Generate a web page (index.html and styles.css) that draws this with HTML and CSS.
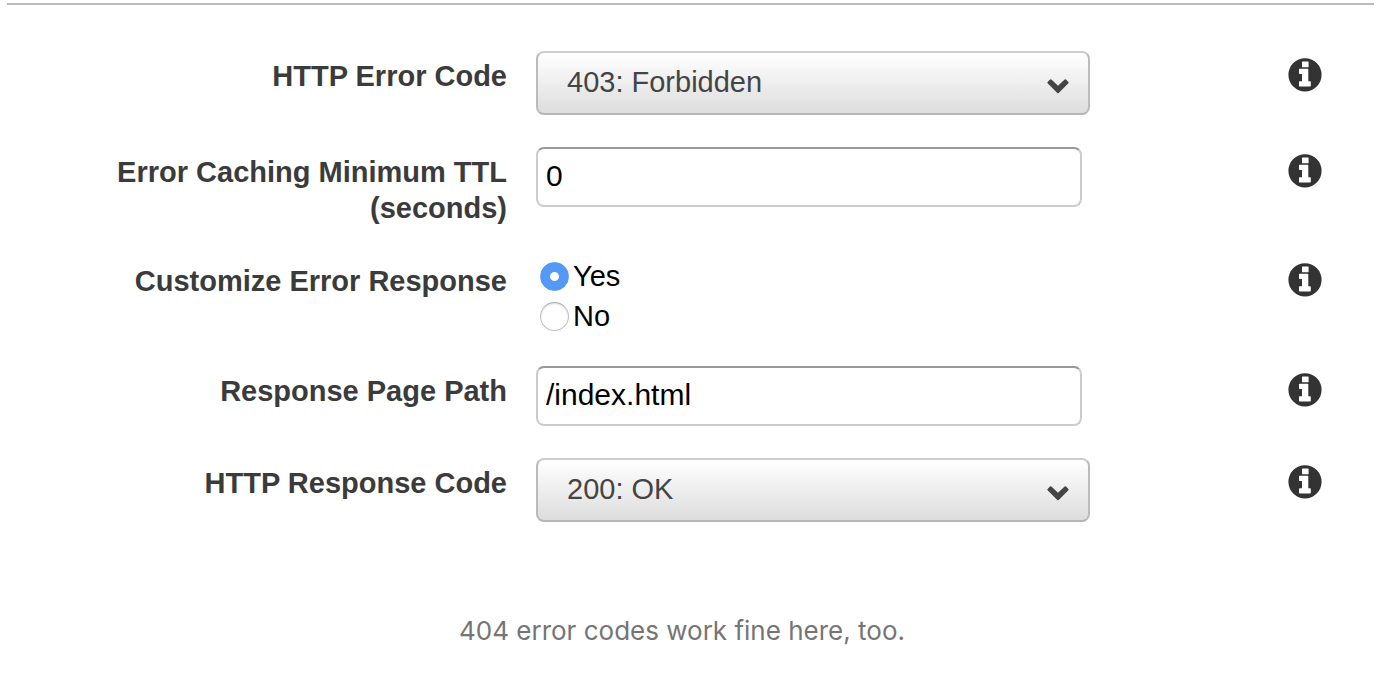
FILE: index.html
```html
<!DOCTYPE html>
<html lang="en">
<head>
<meta charset="utf-8">
<title>Custom Error Response</title>
<link rel="stylesheet" href="styles.css">
</head>
<body>
<svg class="sprite" aria-hidden="true">
  <symbol id="info" viewBox="0 0 34 34">
    <path fill="currentColor" fill-rule="evenodd" d="M17 .2a16.600 16.600 0 1 1 0 33.200a16.600 16.600 0 0 1 0-33.200zM14.500 3.500h5.600q.5 0 .5.5v4.800q0 .5-.5.5h-5.600q-.5 0-.5-.5V4q0-.5.5-.5zM11.700 10.800h7.900q.7 0 .7.700v11.700h1.800q.7 0 .7.700v3.900q0 .7-.7.700H11.700q-.7 0-.7-.7v-3.900q0-.7.7-.7h2.300v-7.200h-2.300q-.7 0-.7-.7v-3.800q0-.7.7-.7z"/>
  </symbol>
  <symbol id="chevron" viewBox="0 0 22 15">
    <path fill="currentColor" d="M.6 2.900L3 .6q.7-.6 1.400 0L11 6.800L17.600.6q.7-.6 1.400 0l2.400 2.300q.6.7 0 1.400L11.700 14q-.7.7-1.400 0L.6 4.300q-.6-.7 0-1.400z"/>
  </symbol>
</svg>
<main class="page">
  <form class="form">
    <div class="row">
      <label class="label" for="error-code">HTTP Error Code</label>
      <div class="field">
        <div class="dropdown">
          <select class="select" id="error-code"><option>403: Forbidden</option></select>
          <svg class="chevron" aria-hidden="true"><use href="#chevron"/></svg>
        </div>
      </div>
      <button class="help" type="button" aria-label="About HTTP Error Code"><svg class="icon"><use href="#info"/></svg></button>
    </div>
    <div class="row">
      <label class="label" for="ttl">Error Caching Minimum TTL (seconds)</label>
      <div class="field"><input class="text" id="ttl" type="text" value="0"></div>
      <button class="help" type="button" aria-label="About Error Caching Minimum TTL"><svg class="icon"><use href="#info"/></svg></button>
    </div>
    <div class="row" role="radiogroup" aria-labelledby="customize">
      <span class="label" id="customize">Customize Error Response</span>
      <div class="choices">
        <label class="choice"><input class="radio" type="radio" name="customize" checked>Yes</label>
        <label class="choice"><input class="radio" type="radio" name="customize">No</label>
      </div>
      <button class="help" type="button" aria-label="About Customize Error Response"><svg class="icon"><use href="#info"/></svg></button>
    </div>
    <div class="row">
      <label class="label" for="path">Response Page Path</label>
      <div class="field"><input class="text" id="path" type="text" value="/index.html"></div>
      <button class="help" type="button" aria-label="About Response Page Path"><svg class="icon"><use href="#info"/></svg></button>
    </div>
    <div class="row">
      <label class="label" for="response-code">HTTP Response Code</label>
      <div class="field">
        <div class="dropdown">
          <select class="select" id="response-code"><option>200: OK</option></select>
          <svg class="chevron" aria-hidden="true"><use href="#chevron"/></svg>
        </div>
      </div>
      <button class="help" type="button" aria-label="About HTTP Response Code"><svg class="icon"><use href="#info"/></svg></button>
    </div>
  </form>
  <p class="caption">404 error codes work fine here, too.</p>
</main>
</body>
</html>
```
FILE: styles.css
```css
* {
  box-sizing: border-box;
}

body {
  margin: 0;
  background: #fff;
  color: #000;
  font-family: "Liberation Sans", Arial, sans-serif;
  font-size: 29px;
}

.sprite {
  position: absolute;
  width: 0;
  height: 0;
}

.page {
  padding: 3px 22px 0 7px;
}

.form {
  display: flex;
  flex-direction: column;
  gap: 30px;
  padding: 46px 52px 0 0;
  border-top: 2px solid #bbb;
}

.row {
  display: grid;
  grid-template-columns: minmax(0, 500fr) minmax(0, 554fr) minmax(0, 203fr);
  column-gap: 29px;
  align-items: start;
}

.label {
  padding: 7px 0 0 100px;
  color: #3b3b3b;
  font-weight: 700;
  line-height: 36px;
  text-align: right;
}

.field {
  padding-bottom: 2px;
}

.dropdown {
  position: relative;
}

.select {
  display: block;
  appearance: none;
  width: 100%;
  height: 64px;
  padding: 0 60px 2px 29px;
  border: 2px solid #bbb;
  border-color: #ccc #bbb #b5b5b5;
  border-radius: 8px;
  background: linear-gradient(#fff, #ddd);
  color: #444;
  font: inherit;
}

.chevron {
  position: absolute;
  top: 28px;
  right: 21px;
  width: 22px;
  height: 15px;
  color: #444;
  pointer-events: none;
}

.text {
  display: block;
  width: calc(100% - 8px);
  height: 60px;
  padding: 0 8px 2px;
  border: 2px solid #ccc;
  border-top-color: #999;
  border-radius: 8px;
  background: #fff;
  color: #000;
  font: inherit;
  font-size: 30px;
}

.choice {
  display: flex;
  align-items: center;
  gap: 4px;
  height: 40px;
  padding-left: 4px;
}

.radio {
  appearance: none;
  flex: none;
  width: 29px;
  height: 29px;
  margin: 0;
  border: 1px solid #c0c0c0;
  border-top-color: #a8a8a8;
  border-radius: 50%;
  background: #fff;
  box-shadow: inset 0 1px 2px #ddd;
}

.radio:checked {
  border-color: #5298f7;
  background: radial-gradient(circle, #fff 4px, #5499f8 5px);
  box-shadow: none;
}

.help {
  justify-self: end;
  margin: 7px 0 0;
  padding: 0;
  border: 0;
  background: none;
  color: #333;
}

.icon {
  display: block;
  width: 34px;
  height: 34px;
}

.caption {
  margin: 0;
  padding: 87px 17px 0 0;
  color: #757575;
  font-family: Inter, sans-serif;
  font-size: 26px;
  line-height: 40px;
  text-align: center;
}
```
